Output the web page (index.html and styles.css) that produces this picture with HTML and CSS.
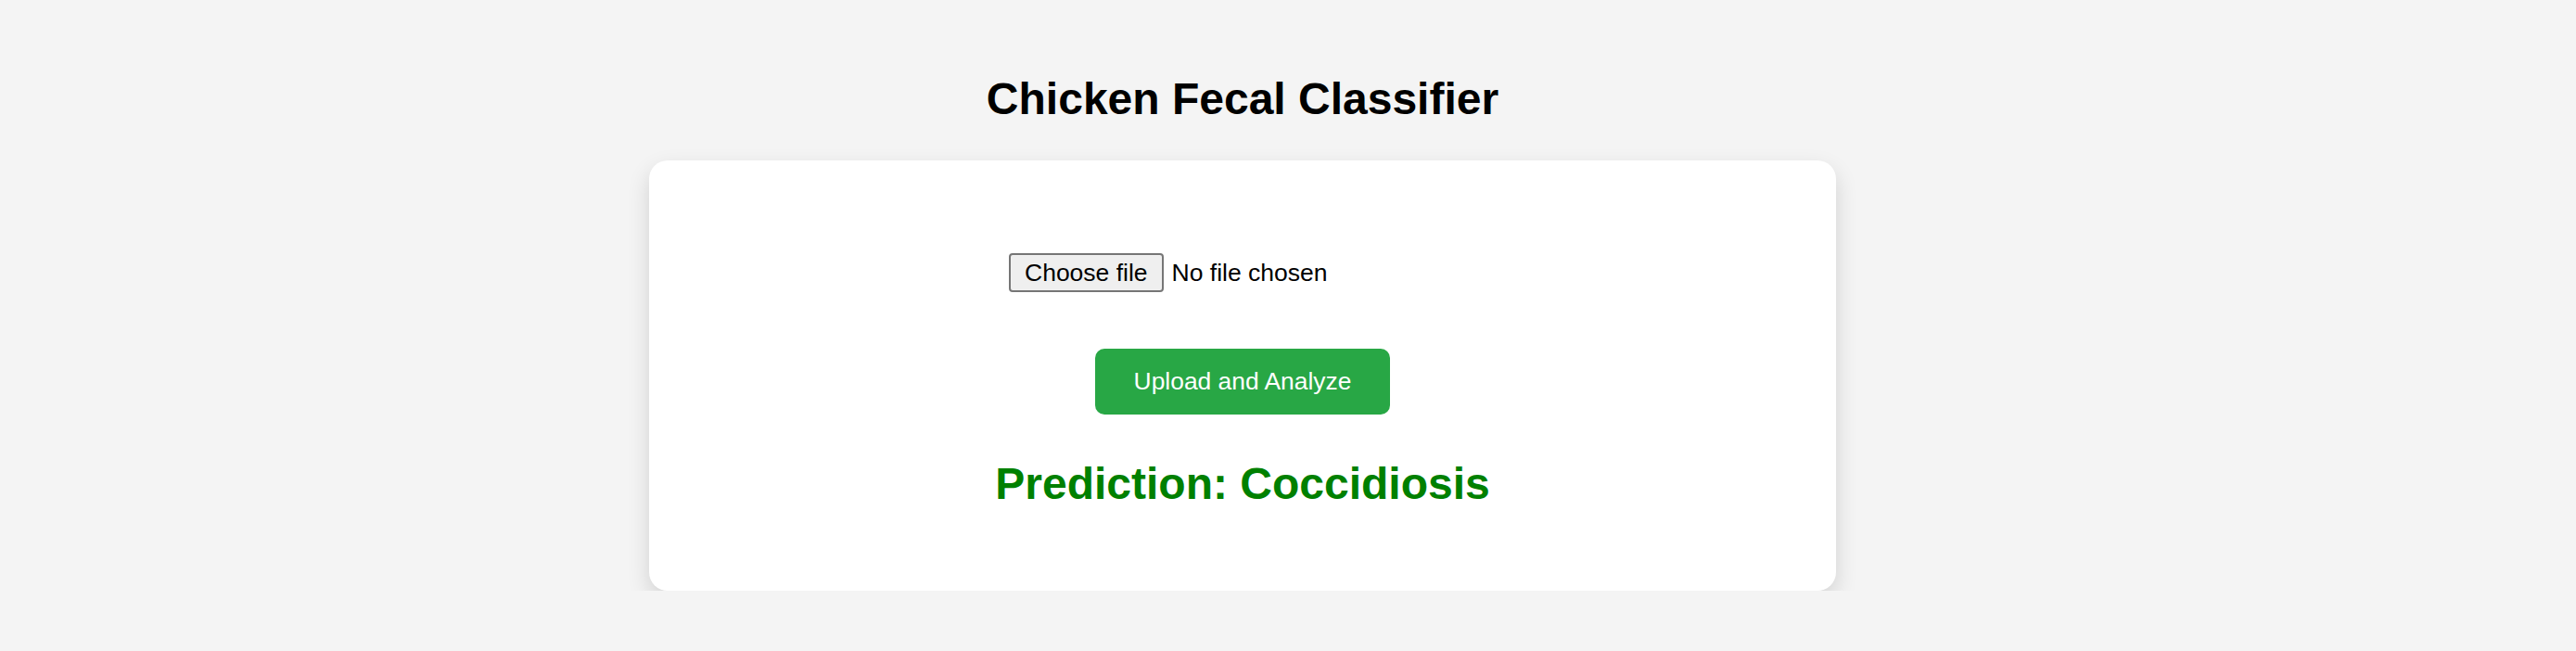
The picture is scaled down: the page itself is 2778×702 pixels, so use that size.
FILE: index.html
```html
<!DOCTYPE html>
<html lang="en">
<head>
<meta charset="utf-8">
<title>Chicken Fecal Classifier</title>
<link rel="stylesheet" href="styles.css">
</head>
<body>
<div class="page">
  <h1 class="title">Chicken Fecal Classifier</h1>
  <form class="card">
    <div class="file-field">
      <label class="file-btn" for="file">Choose file</label>
      <input class="file-input" id="file" type="file">
      <span class="file-name">No file chosen</span>
    </div>
    <button class="submit" type="button">Upload and Analyze</button>
    <h2 class="result">Prediction: Coccidiosis</h2>
  </form>
</div>
</body>
</html>
```
FILE: styles.css
```css
html, body {
  margin: 0;
  padding: 0;
  background: #f4f4f4;
}
body {
  font-family: "Liberation Sans", Arial, Helvetica, sans-serif;
  color: #000;
}
.page {
  width: 2680px;
  display: flex;
  flex-direction: column;
  align-items: center;
  padding-top: 79px;
}
.title {
  margin: 0;
  font-size: 48px;
  font-weight: bold;
  line-height: 55px;
  text-align: center;
}
.card {
  box-sizing: border-box;
  margin-top: 39px;
  width: 1280px;
  height: 464px;
  background: #fff;
  border-radius: 20px;
  box-shadow: 0 10px 24px rgba(0, 0, 0, 0.14);
  display: flex;
  flex-direction: column;
  align-items: center;
  padding-top: 100px;
}
.file-field {
  width: 504px;
  display: flex;
  align-items: center;
  gap: 9px;
  font-size: 26.5px;
}
.file-input {
  display: none;
}
.file-btn {
  box-sizing: border-box;
  height: 42px;
  padding: 0 15px;
  display: flex;
  align-items: center;
  background: #efefef;
  border: 2px solid #767676;
  border-radius: 4px;
  color: #000;
}
.file-name {
  color: #000;
}
.submit {
  margin-top: 61px;
  width: 318px;
  height: 71px;
  border: none;
  border-radius: 10px;
  background: #28a745;
  color: #fff;
  font-family: "Liberation Sans", Arial, Helvetica, sans-serif;
  font-size: 26.4px;
  padding: 0;
}
.result {
  margin: 48px 0 0;
  font-size: 48px;
  line-height: 54px;
  font-weight: bold;
  color: #008000;
}
```
